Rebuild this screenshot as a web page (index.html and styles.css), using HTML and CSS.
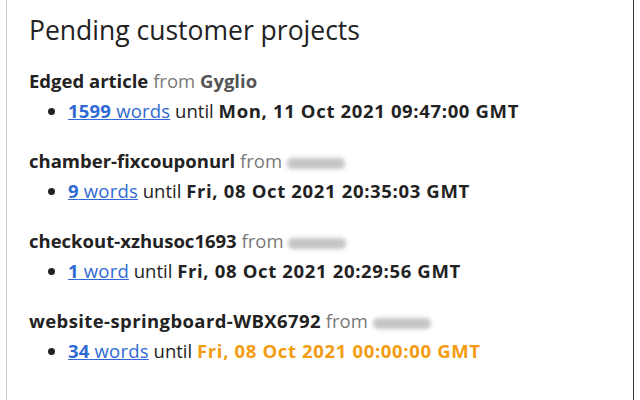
FILE: index.html
```html
<!DOCTYPE html>
<html>
<head>
<meta charset="utf-8">
<link rel="stylesheet" href="styles.css">
</head>
<body>
<div class="panel">
  <h1 class="title">Pending customer projects</h1>
  <div class="project">
    <div class="name"><b>Edged article</b> <span class="from">from</span> <b class="client">Gyglio</b></div>
    <ul class="items">
      <li><a class="words" href="#"><b>1599</b> words</a> until <b class="date">Mon, 11 Oct 2021 09:47:00 GMT</b></li>
    </ul>
  </div>
  <div class="project">
    <div class="name"><b>chamber-fixcouponurl</b> <span class="from">from</span> <span class="blur"></span></div>
    <ul class="items">
      <li><a class="words" href="#"><b>9</b> words</a> until <b class="date">Fri, 08 Oct 2021 20:35:03 GMT</b></li>
    </ul>
  </div>
  <div class="project">
    <div class="name"><b>checkout-xzhusoc1693</b> <span class="from">from</span> <span class="blur"></span></div>
    <ul class="items">
      <li><a class="words" href="#"><b>1</b> word</a> until <b class="date">Fri, 08 Oct 2021 20:29:56 GMT</b></li>
    </ul>
  </div>
  <div class="project">
    <div class="name"><b class="wide">website-springboard-WBX6792</b> <span class="from">from</span> <span class="blur"></span></div>
    <ul class="items">
      <li><a class="words" href="#"><b>34</b> words</a> until <b class="date due">Fri, 08 Oct 2021 00:00:00 GMT</b></li>
    </ul>
  </div>
</div>
</body>
</html>
```
FILE: styles.css
```css
html, body {
  margin: 0;
  padding: 0;
  height: 100%;
  background: #fff;
}
body {
  font-family: "Open Sans", "Noto Sans", sans-serif;
  color: #222;
}
.panel {
  margin-left: 6px;
  width: 628px;
  height: 100%;
  box-sizing: border-box;
  border-left: 1px solid #c8c8c8;
  border-right: 1px solid #333;
  padding: 14px 0 0 22px;
}
.title {
  margin: 0 0 20px 0;
  font-size: 26.5px;
  font-weight: 400;
  line-height: 32px;
  color: #222;
}
.project {
  margin-bottom: 20px;
}
.name {
  font-size: 18.5px;
  line-height: 30px;
}
.name b {
  font-weight: 700;
}
.name .wide {
  letter-spacing: 0.4px;
}
.from {
  color: #7a7a7a;
}
.client {
  color: #555;
}
.blur {
  display: inline-block;
  width: 58px;
  height: 11px;
  background: #c4c4c4;
  border-radius: 5px;
  filter: blur(2px);
  vertical-align: -1px;
}
.items {
  margin: 0;
  padding-left: 39px;
  font-size: 18.5px;
  line-height: 30px;
}
.words {
  color: #2f6ad4;
  text-decoration: underline;
  letter-spacing: 0.2px;
}
.date {
  letter-spacing: 0.65px;
}
.due {
  color: #f39c12;
}
```
